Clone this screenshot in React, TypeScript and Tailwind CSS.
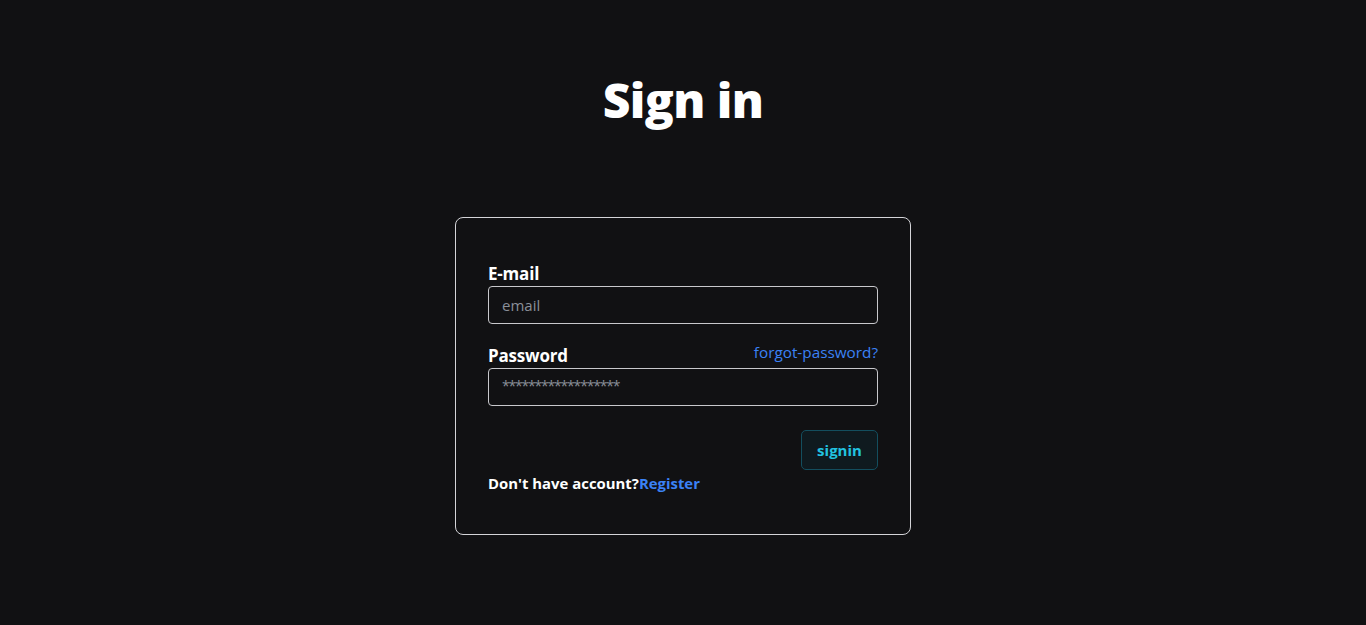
import React from "react";

export default function App() {
  return (
    <div
      className="min-h-screen w-full bg-[#111113] flex flex-col items-center text-white"
      style={{ fontFamily: '"Open Sans", "Noto Sans", sans-serif' }}
    >
      <h1 className="mt-[70px] text-[48px] leading-[60px] font-extrabold tracking-[-0.6px]">Sign in</h1>
      <div className="mt-[87px] w-[456px] border border-[#d4d4d8] rounded-[8px] px-8 pt-[43px] pb-[41px]">
        <label className="block text-[17px] leading-[25px] font-bold tracking-[-0.2px]">E-mail</label>
        <input
          className="w-full h-[38px] rounded-[4px] border border-[#c8c8cc] bg-transparent px-[13px] text-[15px] text-white placeholder:text-[#8a8f98] outline-none"
          placeholder="email"
        />
        <div className="mt-[19px] flex items-end justify-between h-[25px]">
          <label className="text-[17px] leading-[25px] font-bold tracking-[-0.2px]">Password</label>
          <a className="text-[15.3px] leading-[24px] text-[#3b82f6] relative -top-[4px]">forgot-password?</a>
        </div>
        <input
          className="w-full h-[38px] rounded-[4px] border border-[#c8c8cc] bg-transparent px-[13px] pb-[3px] text-[14px] tracking-[-1.2px] text-white placeholder:text-[#8a8f98] outline-none"
          placeholder="******************"
          type="password"
        />
        <div className="mt-[24px] flex justify-end">
          <button className="w-[77px] h-[40px] rounded-[5px] border border-[#134e5e] bg-[#0f1a1f] text-[#22c3e0] text-[15px] font-bold">
            signin
          </button>
        </div>
        <p className="mt-[3px] text-[14.9px] leading-[20px] font-bold">
          Don't have account?<span className="text-[#3b82f6]">Register</span>
        </p>
      </div>
    </div>
  );
}
